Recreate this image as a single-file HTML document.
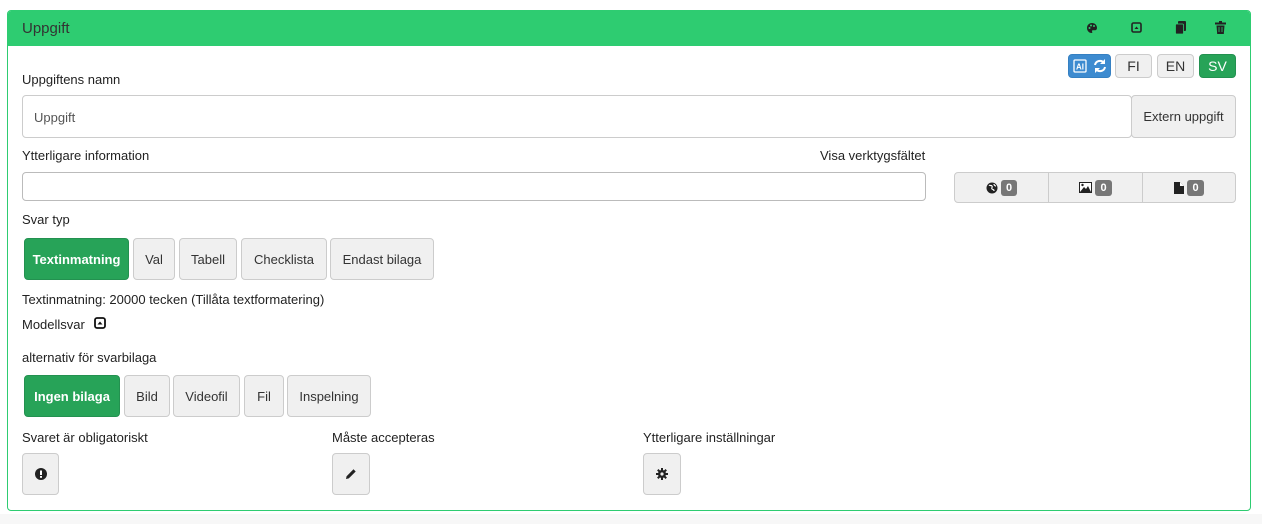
<!DOCTYPE html><html><head><style>
*{box-sizing:border-box}body{margin:0;width:1262px;height:524px;background:#fff;font-family:"Liberation Sans",sans-serif;font-size:13px;color:#222;position:relative;overflow:hidden}
.a{position:absolute}
.card{left:7px;top:10px;width:1244px;height:501px;border:1px solid #2ecc71;border-radius:4px}
.hdr{left:8px;top:11px;width:1242px;height:35px;background:#2ecc71;border-radius:3px 3px 0 0}
.btn{position:absolute;background:#f0f0f0;border:1px solid #ccc;border-radius:4px;display:flex;align-items:center;justify-content:center;color:#333}
.g{background:#27a358;border-color:#239150;color:#fff;font-weight:bold}
.inp{position:absolute;border:1px solid #ccc;border-radius:4px;background:#fff}
.bd{display:inline-block;background:#777;color:#fff;font-weight:bold;font-size:11px;border-radius:3px;padding:2px 5px;margin-left:3px}
</style></head><body>
<div class="a" style="left:0;top:514px;width:1262px;height:10px;background:#f7f7f7"></div>
<div class="a card"></div>
<div class="a hdr"></div>
<div class="a" style="left:22px;top:20px;font-size:15px;color:#333">Uppgift</div>
<svg class="a" style="left:1086px;top:22px" width="12" height="12" viewBox="0 0 12 12"><path d="M6 1C3 1 1 3.2 1 6s2 5 4.5 5c1 0 1-.8.6-1.4-.4-.6 0-1.3.8-1.3H9c1.2 0 2-1 2-2.3C11 3 8.8 1 6 1z" fill="#222"/><circle cx="3.5" cy="6" r="1" fill="#2ecc71"/><circle cx="5" cy="3.5" r="1" fill="#2ecc71"/><circle cx="8" cy="4" r="1" fill="#2ecc71"/></svg>
<svg class="a" style="left:1131px;top:22px" width="11" height="11" viewBox="0 0 11 11"><rect x="1" y="1" width="9" height="9" rx="1.5" fill="none" stroke="#222" stroke-width="1.6"/><path d="M3.5 7L5.5 4.5 7.5 7z" fill="#222"/></svg>
<svg class="a" style="left:1175px;top:21px" width="12" height="13" viewBox="0 0 12 13"><rect x="3" y="0" width="8" height="10" rx="1" fill="#222"/><rect x="0.5" y="3" width="8" height="10" rx="1" fill="#222" stroke="#2ecc71" stroke-width=".8"/></svg>
<svg class="a" style="left:1215px;top:21px" width="11" height="13" viewBox="0 0 11 13"><rect x="0" y="1.5" width="11" height="2" fill="#222"/><rect x="4" y="0" width="3" height="2" fill="#222"/><path d="M1.5 4.5h8l-.7 8.5H2.2z" fill="#222"/><path d="M4 6v5M7 6v5" stroke="#2ecc71" stroke-width=".8"/></svg>
<div class="btn" style="left:1068px;top:54px;width:43px;height:24px;background:#3d8bd0;border-color:#3580c2">
<svg width="36" height="16" viewBox="0 0 36 16"><rect x="2" y="2" width="12" height="12" rx="1" fill="none" stroke="#fff" stroke-width="1.3"/><text x="4" y="11.5" font-size="8" font-weight="bold" fill="#fff" font-family="Liberation Sans">AI</text><path d="M23 7a5 5 0 0 1 9-2M33 9a5 5 0 0 1-9 2" fill="none" stroke="#fff" stroke-width="2"/><path d="M33 1v5h-5zM23 15v-5h5z" fill="#fff"/></svg></div>
<div class="btn" style="left:1115px;top:54px;width:37px;height:24px;font-size:14px">FI</div>
<div class="btn" style="left:1157px;top:54px;width:37px;height:24px;font-size:14px">EN</div>
<div class="btn g" style="left:1199px;top:54px;width:37px;height:24px;font-size:14px;font-weight:normal">SV</div>
<div class="a" style="left:22px;top:72px">Uppgiftens namn</div>
<div class="inp" style="left:22px;top:95px;width:1110px;height:43px"></div>
<div class="a" style="left:34px;top:110px;color:#555">Uppgift</div>
<div class="btn" style="left:1131px;top:95px;width:105px;height:43px">Extern uppgift</div>
<div class="a" style="left:22px;top:148px">Ytterligare information</div>
<div class="a" style="left:820px;top:148px">Visa verktygsfältet</div>
<div class="inp" style="left:22px;top:172px;width:904px;height:29px;border-color:#bbb"></div>
<div class="btn" style="left:954px;top:172px;width:95px;height:31px;border-radius:4px 0 0 4px"><svg width="12" height="12" viewBox="0 0 12 12"><circle cx="6" cy="6" r="5.5" fill="#222"/><path d="M3 3c1 1 2 0 3 1s-1 2 0 3 2 0 2 2M8 2c0 1 1 2 2 2" stroke="#fff" stroke-width="1.2" fill="none"/></svg><span class="bd">0</span></div>
<div class="btn" style="left:1048px;top:172px;width:95px;height:31px;border-radius:0"><svg width="13" height="11" viewBox="0 0 13 11"><rect x=".5" y=".5" width="12" height="10" fill="#fff" stroke="#222"/><path d="M1 10L5 5l2 2 2-3 3 6z" fill="#222"/><circle cx="3.5" cy="3" r="1.2" fill="#222"/></svg><span class="bd">0</span></div>
<div class="btn" style="left:1142px;top:172px;width:94px;height:31px;border-radius:0 4px 4px 0"><svg width="10" height="12" viewBox="0 0 10 12"><path d="M0 0h6l4 4v8H0z" fill="#222"/><path d="M6 0v4h4" fill="#fff"/></svg><span class="bd">0</span></div>
<div class="a" style="left:22px;top:212px">Svar typ</div>
<div class="btn g" style="left:24px;top:238px;width:105px;height:42px">Textinmatning</div>
<div class="btn" style="left:133px;top:238px;width:42px;height:42px">Val</div>
<div class="btn" style="left:179px;top:238px;width:58px;height:42px">Tabell</div>
<div class="btn" style="left:241px;top:238px;width:86px;height:42px">Checklista</div>
<div class="btn" style="left:330px;top:238px;width:104px;height:42px">Endast bilaga</div>
<div class="a" style="left:22px;top:292px">Textinmatning: 20000 tecken (Tillåta textformatering)</div>
<div class="a" style="left:22px;top:317px">Modellsvar</div>
<svg class="a" style="left:94px;top:317px" width="12" height="12" viewBox="0 0 12 12"><rect x="1" y="1" width="10" height="10" rx="2" fill="none" stroke="#111" stroke-width="1.8"/><path d="M3.5 7.5L6 4.5 8.5 7.5z" fill="#111"/></svg>
<div class="a" style="left:22px;top:350px">alternativ för svarbilaga</div>
<div class="btn g" style="left:24px;top:375px;width:96px;height:42px">Ingen bilaga</div>
<div class="btn" style="left:124px;top:375px;width:46px;height:42px">Bild</div>
<div class="btn" style="left:173px;top:375px;width:67px;height:42px">Videofil</div>
<div class="btn" style="left:244px;top:375px;width:40px;height:42px">Fil</div>
<div class="btn" style="left:287px;top:375px;width:84px;height:42px">Inspelning</div>
<div class="a" style="left:22px;top:430px">Svaret är obligatoriskt</div>
<div class="a" style="left:332px;top:430px">Måste accepteras</div>
<div class="a" style="left:643px;top:430px">Ytterligare inställningar</div>
<div class="btn" style="left:22px;top:453px;width:37px;height:42px"><svg width="12" height="12" viewBox="0 0 12 12"><circle cx="6" cy="6" r="6" fill="#222"/><rect x="5" y="2.5" width="2" height="4.5" fill="#fff"/><rect x="5" y="8" width="2" height="1.8" fill="#fff"/></svg></div>
<div class="btn" style="left:332px;top:453px;width:38px;height:42px"><svg width="12" height="12" viewBox="0 0 12 12"><path d="M1 11l.6-2.8L8.5 1.3l2.2 2.2-6.9 6.9z" fill="#222"/></svg></div>
<div class="btn" style="left:643px;top:453px;width:38px;height:42px"><svg width="12" height="12" viewBox="0 0 12 12"><g fill="#222"><circle cx="6" cy="6" r="4"/><rect x="5" y="0" width="2" height="12"/><rect x="0" y="5" width="12" height="2"/><rect x="5" y="0" width="2" height="12" transform="rotate(45 6 6)"/><rect x="5" y="0" width="2" height="12" transform="rotate(-45 6 6)"/></g><circle cx="6" cy="6" r="1.6" fill="#f0f0f0"/></svg></div>
</body></html>
